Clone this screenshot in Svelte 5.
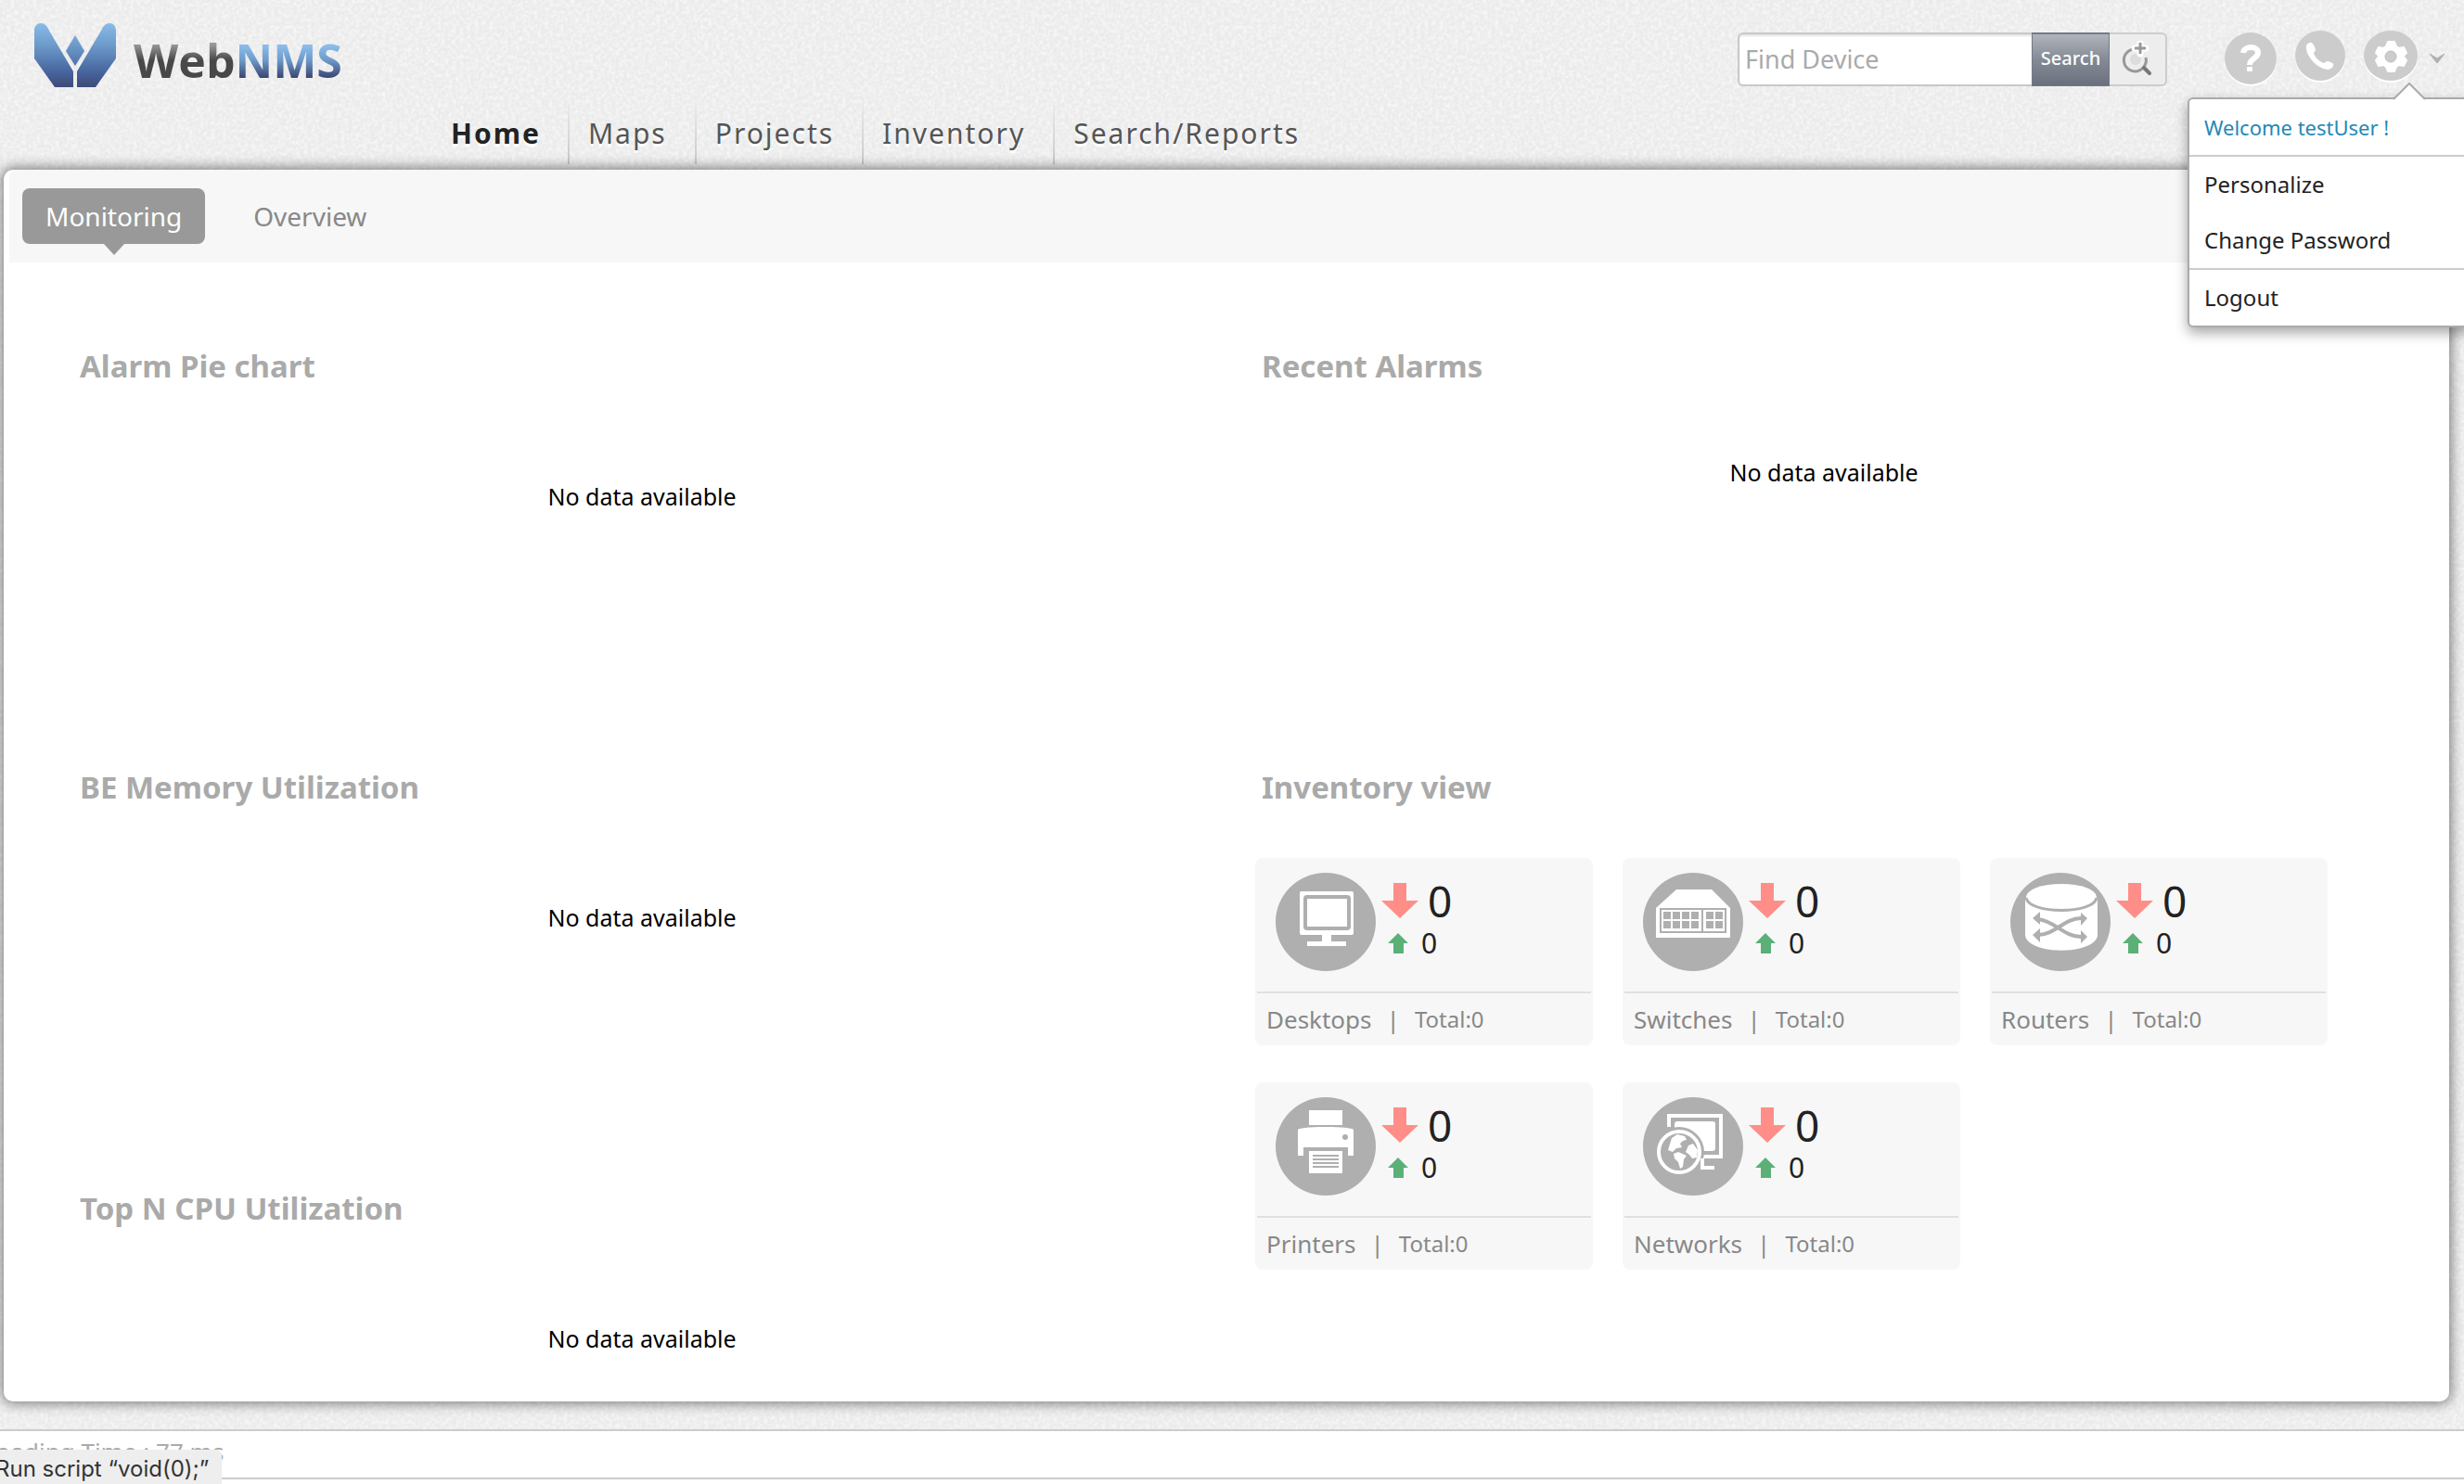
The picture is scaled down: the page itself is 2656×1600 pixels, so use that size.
<script>
  const nav = ['Home', 'Maps', 'Projects', 'Inventory', 'Search/Reports'];
  const left = ['Alarm Pie chart', 'BE Memory Utilization', 'Top N CPU Utilization'];
  const cards = ['Desktops', 'Switches', 'Routers', 'Printers', 'Networks'];
  let query = $state('');
</script>

<div class="page">
  <svg class="texture" aria-hidden="true">
    <filter id="grain" x="0" y="0" width="100%" height="100%">
      <feTurbulence type="fractalNoise" baseFrequency="0.25" numOctaves="2" seed="4" />
      <feColorMatrix values="0 0 0 0 1  0 0 0 0 1  0 0 0 0 1  2.2 0 0 0 -0.8" />
    </filter>
    <rect width="100%" height="100%" filter="url(#grain)" />
  </svg>

  <header>
    <div class="top">
      <a class="logo" href="#home" aria-label="WebNMS">
        <svg class="mark" viewBox="0 0 88 69" aria-hidden="true">
          <defs>
            <linearGradient id="blue" gradientUnits="userSpaceOnUse" x1="0" y1="0" x2="0" y2="69">
              <stop offset="0" stop-color="#8abbe9" />
              <stop offset="0.35" stop-color="#6c9aca" />
              <stop offset="0.75" stop-color="#48669f" />
              <stop offset="1" stop-color="#3d4a77" />
            </linearGradient>
          </defs>
          <g fill="url(#blue)">
            <path d="M0 38V8C0 3 3 0 7 0s7 3 9 8l26 44v17H22Z" />
            <path d="M88 38V8c0-5-3-8-7-8s-7 3-9 8L46 52v17h20Z" />
          </g>
          <path d="m44 10 12 20-12 20-12-20Z" fill="#ebebeb" />
          <path d="m44 13 10 17-10 16-10-16Z" fill="url(#blue)" />
        </svg>
        <span class="word"><span class="web">Web</span><span class="nms">NMS</span></span>
      </a>
      <div class="tools">
        <form class="search" onsubmit={(e) => e.preventDefault()}>
          <input type="text" aria-label="Find Device" placeholder="Find Device" bind:value={query} />
          <button class="go" type="submit">Search</button>
          <button class="adv" type="button" aria-label="Advanced search">
            <svg width="34" height="40" viewBox="0 0 34 40" fill="none">
              <circle cx="15" cy="20" r="6" fill="#dcdcdc" />
              <path d="M13 9a12 12 0 1 0 13 9" stroke="#999" stroke-width="3" />
              <path d="m24 29 6 6" stroke="#777" stroke-width="4" stroke-linecap="round" />
              <path d="M20 2v12M14 8h12" stroke="#fff" stroke-width="7" stroke-linecap="round" />
              <path d="M20 2v12M14 8h12" stroke="#999" stroke-width="3" />
            </svg>
          </button>
        </form>
        <div class="icons">
          <button class="help" type="button" aria-label="Help"><svg width="56" height="56" viewBox="0 0 56 56">
            <circle cx="28" cy="28" r="28" fill="#ccc" />
            <path d="M20 22c1-8 16-8 16 0 0 6-9 6-9 13" fill="none" stroke="#fff" stroke-width="6" />
            <rect x="24" y="37" width="6" height="5" rx="1" fill="#fff" />
          </svg></button>
          <button type="button" aria-label="Contact"><svg width="54" height="54" viewBox="0 0 54 54">
            <circle cx="27" cy="27" r="27" fill="#ccc" />
            <path d="M12 16c1-2 4-4 6-3 2 2 4 6 4 8 0 1-2 2-2 3 1 5 6 9 11 11 1 0 2-2 4-2 2 1 5 1 6 3 1 3-2 5-5 6-12 0-26-16-24-26Z" fill="#fff" />
          </svg></button>
          <button type="button" aria-label="Settings"><svg width="58" height="54" viewBox="0 0 58 54">
            <ellipse cx="29" cy="27" rx="29" ry="27" fill="#ccc" />
            <path d="M26 12h7l2 5 3 2 5-1 3 6-3 3v1l3 4-3 6-5-1-3 2-2 5h-7l-2-5-3-2-5 1-3-6 3-4v-1l-3-3 3-6 5 1 3-2Z" fill="#fff" stroke="#fff" stroke-width="2" stroke-linejoin="round" />
            <circle cx="29" cy="28" r="6" fill="#ccc" stroke="#bbb" />
          </svg></button>
          <svg class="caret" width="18" height="12" viewBox="0 0 18 12" aria-hidden="true"><path d="m1 1 8 5 8-5-8 10Z" fill="#b0b0b0" stroke="#b0b0b0" /></svg>
        </div>
      </div>
    </div>
    <nav aria-label="Main">
      {#each nav as item, i}
        <a href="#{item}" class:active={i === 0}>{item}</a>
      {/each}
    </nav>
  </header>

  <div class="menu">
    <svg class="tip" width="36" height="20" viewBox="0 0 36 20" aria-hidden="true"><path d="M1 18 18 1l17 17v2H1Z" fill="#fff" /><path d="M1 18 18 1l17 17" fill="none" stroke="#aaa" stroke-width="2" /></svg>
    <div class="group welcome">Welcome testUser !</div>
    <div class="group"><a href="#personalize">Personalize</a><a href="#password">Change Password</a></div>
    <div class="group"><a href="#logout">Logout</a></div>
  </div>

  <main>
    <div class="tabs">
      <a href="#monitoring" class="on">Monitoring</a>
      <a href="#overview">Overview</a>
    </div>
    <div class="cols">
      <div class="col">
        {#each left as title}
          <section>
            <h2>{title}</h2>
            <p>No data available</p>
          </section>
        {/each}
      </div>
      <div class="col right">
        <section>
          <h2>Recent Alarms</h2>
          <p>No data available</p>
        </section>
        <section>
          <h2>Inventory view</h2>
          <div class="cards">
            {#each cards as name}
              <article>
                <div class="body">
                  <svg class="device" viewBox="0 0 108 106" aria-hidden="true">
                    <ellipse cx="54" cy="53" rx="54" ry="53" fill="#afafaf" />
                    {#if name === 'Desktops'}
                      <rect x="26" y="20" width="58" height="47" rx="2" fill="#fff" />
                      <rect x="32" y="26" width="47" height="34" rx="2" fill="none" stroke="#afafaf" stroke-width="4" />
                      <path d="M50 67h10v7h16v5H34v-5h16Z" fill="#fff" />
                    {:else if name === 'Switches'}
                      <path d="m36 18h38l20 20v32H14V38Z" fill="#fff" />
                      <path d="M19 39h45v25H19ZM64 39h25v25H64Z" fill="none" stroke="#afafaf" stroke-width="2" />
                      {#each [22, 32, 42, 52, 68, 78] as x}
                        <rect {x} y="42" width="8" height="8" fill="#afafaf" />
                        <rect {x} y="52" width="8" height="8" fill="#afafaf" />
                      {/each}
                    {:else if name === 'Routers'}
                      <path d="M16 27v41c4 21 74 21 78 0V27Z" fill="#fff" />
                      <ellipse cx="55" cy="26" rx="38" ry="14" fill="#fff" />
                      <path d="M17 27c3 18 73 18 76 0" fill="none" stroke="#afafaf" stroke-width="3" />
                      <path d="M30 50c18 2 28 19 46 19M30 67c18 0 28-18 46-18" fill="none" stroke="#afafaf" stroke-width="4" />
                      <path d="m24 49 8-7v14ZM24 67l8-7v15ZM83 49l-7-6v14ZM83 69l-7-7v14Z" fill="#afafaf" />
                    {:else if name === 'Printers'}
                      <path d="M36 14h36v16H36ZM24 35c2-4 58-4 60 0v28h-6v-9H30v9h-6ZM36 58h36v24H36Z" fill="#fff" />
                      <circle cx="75" cy="43" r="3" fill="#afafaf" />
                      <path d="M40 63h28M40 67h28M40 71h28M40 75h28" stroke="#afafaf" stroke-width="2" />
                    {:else}
                      <path d="M28 32V20h56v44H64M64 64v12h13" fill="none" stroke="#fff" stroke-width="4" />
                      <rect x="34" y="26" width="44" height="32" rx="3" fill="#fff" />
                      <circle cx="39" cy="59" r="27" fill="#afafaf" />
                      <path d="M64 66v10h13" fill="none" stroke="#fff" stroke-width="4" />
                      <circle cx="39" cy="59" r="22" fill="none" stroke="#fff" stroke-width="4" />
                      <path d="M31 44l6-4 8 2 2 4-4 1-3 3 2 4-6 1-4 4-5-2ZM49 52l5-2 5 7-1 8-5 1-3-4-4-3ZM33 61l5-2 9 4-3 4-1 8-3 2-2-7-4-4Z" fill="#fff" />
                    {/if}
                  </svg>
                  <div class="counts">
                    <div class="count down"><svg viewBox="0 0 40 38" aria-hidden="true"><path d="M13 0h14v19h13L20 38 0 19h13Z" fill="#ff8e88" /></svg>0</div>
                    <div class="count up"><svg viewBox="0 0 22 22" aria-hidden="true"><path d="M11 0 22 11h-5v11H6V11H0Z" fill="#5bb078" /></svg>0</div>
                  </div>
                </div>
                <footer><a href="#{name}">{name}</a><span class="bar">|</span><span class="total">Total:0</span></footer>
              </article>
            {/each}
          </div>
        </section>
      </div>
    </div>
  </main>

  <div class="foot"><div class="timing">Loading Time : 77 ms</div></div>
  <div class="status">Run script “void(0);”</div>
</div>

<style>
  :global(body) { margin: 0; }
  .page {
    position: relative;
    min-height: 100vh;
    overflow: hidden;
    box-sizing: border-box;
    display: flex;
    flex-direction: column;
    background: #ebebeb;
    color: #222;
    font-family: 'Noto Sans', 'Open Sans', sans-serif;
    font-size: 24px;
    line-height: 32px;
  }
  .texture { position: absolute; inset: 0; width: 100%; height: 100%; opacity: 0.6; }
  a { color: inherit; text-decoration: none; }
  button { font: inherit; border: 0; padding: 0; background: none; cursor: pointer; }
  header, main, .foot { position: relative; }
  header { height: 183px; display: flex; flex-direction: column; justify-content: space-between; }
  .top { display: flex; justify-content: space-between; padding: 25px 20px 0 37px; }
  .logo { display: flex; gap: 19px; }
  .mark { width: 88px; height: 69px; }
  .word { font-family: 'Open Sans', sans-serif; font-weight: 700; font-size: 50px; line-height: 80px; }
  .web, .nms { background: linear-gradient(#999 25%, #484848 50%, #484848); background-clip: text; color: transparent; }
  .nms { background-image: linear-gradient(#8abbe9 28%, #6c9aca 50%, #3d4a77 76%); }
  .tools { display: flex; align-items: flex-start; gap: 62px; padding-top: 8px; }
  .search { display: flex; height: 58px; margin-top: 2px; }
  .search input {
    box-sizing: border-box; width: 317px; padding: 0 6px; border: 2px solid #c8c8c8; border-right: 0;
    border-radius: 6px 0 0 6px; font: inherit; font-size: 27px; color: #333; box-shadow: inset 0 2px 2px #e4e4e4;
  }
  .search input::placeholder { color: #aaa; opacity: 1; }
  .go { width: 84px; padding-bottom: 4px; color: #fff; font-size: 20px; font-weight: 500; background: linear-gradient(#b0b4bb, #848a95 50%, #6a717d); border: 1px solid #737a88; border-top: 2px solid #737a88; }
  .adv { width: 62px; background: #ededed; border: 2px solid #ccc; border-left: 0; border-radius: 0 6px 6px 0; display: flex; align-items: center; justify-content: center; }
  .icons { display: flex; gap: 20px; align-items: flex-start; }
  .icons button svg { display: block; filter: drop-shadow(0 2px 0 #fff); }
  .help { padding-top: 2px; }
  .caret { margin: 24px 0 0 -8px; }
  nav { display: flex; align-items: flex-end; padding-left: 464px; padding-bottom: 6px; }
  nav a {
    padding: 12px 30px 12px 20px; font-size: 30px; line-height: 42px; letter-spacing: 2px; color: #555;
    text-shadow: 0 3px 1px #fff; border-left: 2px solid; border-image: linear-gradient(#ebebeb, #c8c8c8) 1;
  }
  nav a.active { padding-right: 29px; font-weight: 700; color: #222; border-color: transparent; border-image: none; }
  .menu {
    position: absolute; z-index: 3; top: 105px; right: -8px; width: 306px; box-sizing: border-box; background: #fff;
    border: 2px solid #aaa; border-radius: 6px; box-shadow: 0 6px 14px rgba(0, 0, 0, 0.35);
  }
  .tip { position: absolute; top: -18px; left: 219px; }
  .group { padding: 0 16px; line-height: 60px; border-top: 2px solid #ccc; }
  .group a { display: block; }
  .welcome { border-top: 0; color: #2489b5; font-size: 22px; }
  main { margin: 0 16px 0 4px; flex: 1; background: #fff; border-radius: 10px; box-shadow: 0 0 14px 2px rgba(0, 0, 0, 0.5); }
  .tabs { margin: 0 6px; padding: 20px 14px; display: flex; gap: 27px; background: #f7f7f7; border-radius: 8px 8px 0 0; font-size: 28px; line-height: 60px; color: #888; }
  .tabs a { padding: 0 25px; border-radius: 8px; position: relative; }
  .tabs .on { background: #999; color: #fff; }
  .on::after { content: ''; position: absolute; top: 100%; left: 50%; margin-left: -11px; border: 11px solid transparent; border-top: 12px solid #999; border-bottom: 0; }
  .cols { display: grid; grid-template-columns: 1fr 1fr; gap: 62px; padding: 82px 68px 0 82px; }
  section:not(:last-child) { height: 454px; }
  h2 { margin: 0; font-size: 33px; line-height: 60px; color: #aaa; font-weight: 700; }
  p { margin: 94px 0 0; text-align: center; color: #000; font-size: 25px; }
  .right p { margin-top: 68px; }
  .cards { display: grid; grid-template-columns: repeat(3, 364px); gap: 40px 32px; margin: 46px 0 0 -7px; }
  article { background: #f7f7f7; border-radius: 8px; }
  .body { display: flex; gap: 6px; height: 146px; padding: 16px 20px 0; box-sizing: border-box; margin: 0 2px; border-bottom: 2px solid #e0e0e0; }
  .device { width: 108px; height: 106px; }
  .count { display: flex; align-items: center; }
  .down { font-size: 46px; line-height: 60px; gap: 10px; }
  .down svg { width: 40px; height: 38px; }
  .up { font-size: 30px; line-height: 32px; gap: 14px; padding-left: 7px; }
  .up svg { width: 22px; height: 22px; }
  article footer { padding: 0 12px; line-height: 56px; font-size: 26px; color: #888; display: flex; }
  .bar { margin: 0 16px; }
  .total { font-size: 24px; }
  .foot { margin-top: 30px; background: #fff; border-top: 2px solid #ccc; height: 57px; }
  .timing { height: 52px; border-bottom: 2px solid #ccc; color: #aaa; padding-top: 6px; box-sizing: border-box; font-size: 26px; text-indent: -18px; }
  .status { position: absolute; left: 0; bottom: 0; height: 37px; padding: 0 14px 0 0; text-indent: -5px; background: #eee; border-radius: 0 6px 0 0; color: #333; font-family: Inter, sans-serif; font-size: 24px; line-height: 42px; }
</style>
